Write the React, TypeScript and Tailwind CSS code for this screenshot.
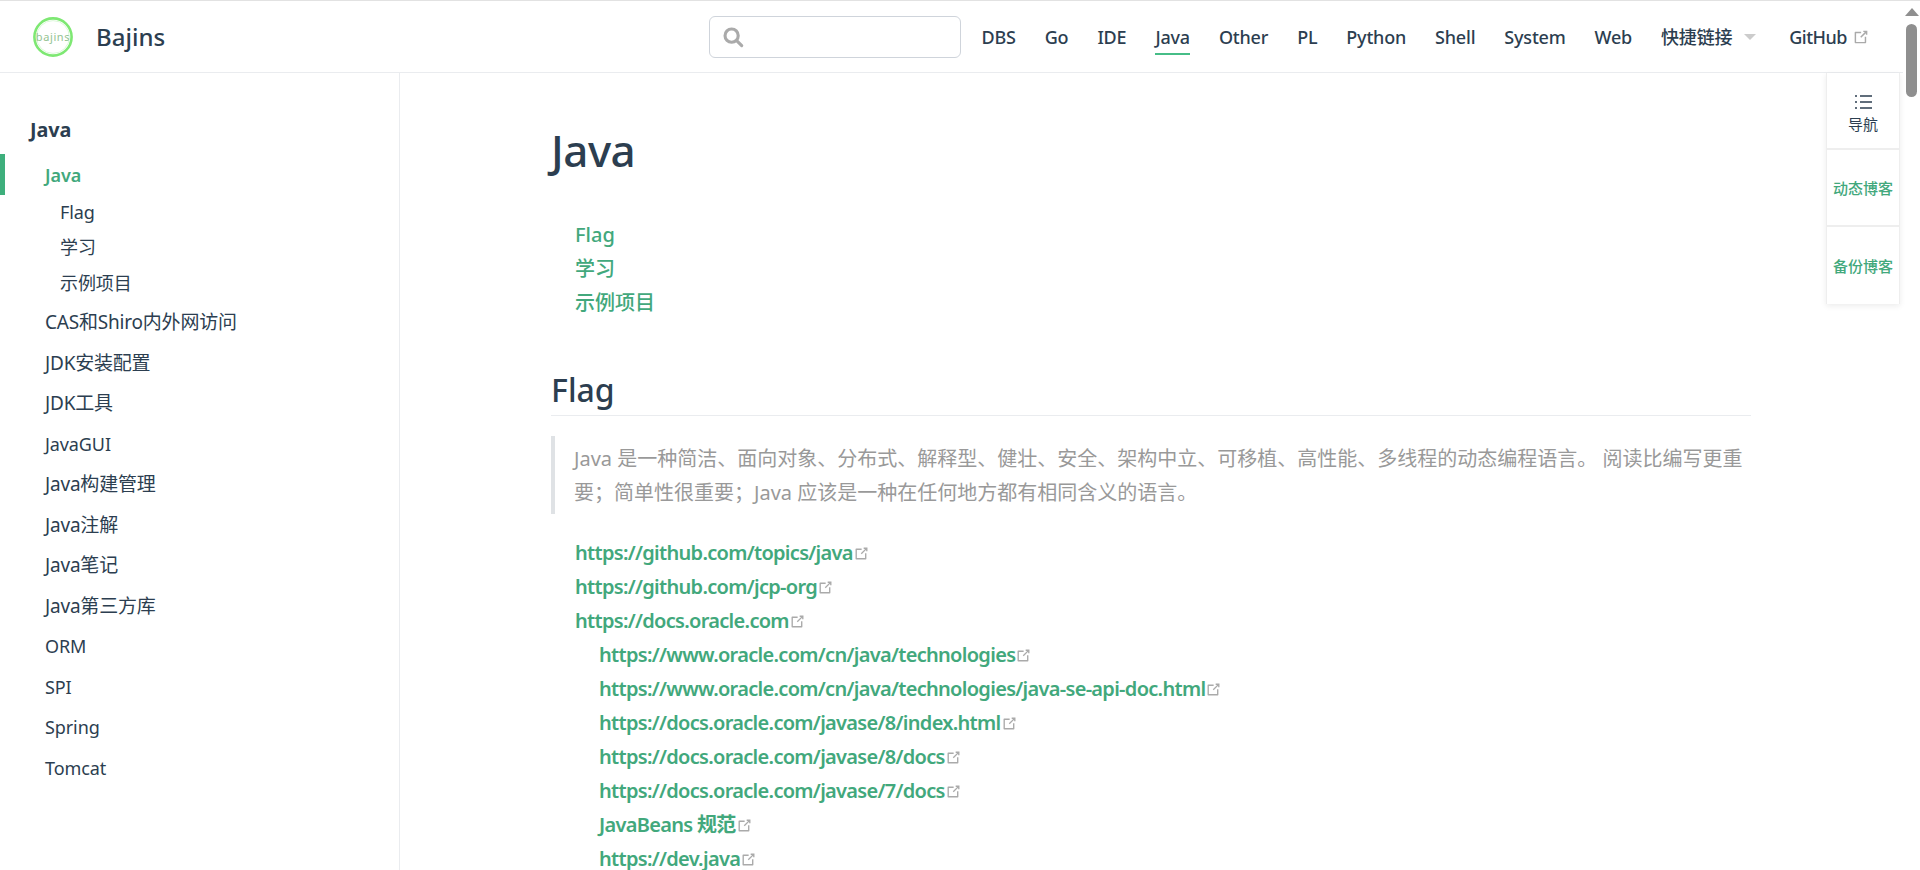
const navItems = ['DBS', 'Go', 'IDE', 'Java', 'Other', 'PL', 'Python', 'Shell', 'System', 'Web'];

const sidebarItems = [
  { label: 'CAS和Shiro内外网访问', cjk: true },
  { label: 'JDK安装配置', cjk: true },
  { label: 'JDK工具', cjk: true },
  { label: 'JavaGUI', cjk: false },
  { label: 'Java构建管理', cjk: true },
  { label: 'Java注解', cjk: true },
  { label: 'Java笔记', cjk: true },
  { label: 'Java第三方库', cjk: true },
  { label: 'ORM', cjk: false },
  { label: 'SPI', cjk: false },
  { label: 'Spring', cjk: false },
  { label: 'Tomcat', cjk: false },
];

const links = [
  { href: 'https://github.com/topics/java', nested: false },
  { href: 'https://github.com/jcp-org', nested: false },
  { href: 'https://docs.oracle.com', nested: false },
  { href: 'https://www.oracle.com/cn/java/technologies', nested: true },
  { href: 'https://www.oracle.com/cn/java/technologies/java-se-api-doc.html', nested: true },
  { href: 'https://docs.oracle.com/javase/8/index.html', nested: true },
  { href: 'https://docs.oracle.com/javase/8/docs', nested: true },
  { href: 'https://docs.oracle.com/javase/7/docs', nested: true },
  { href: 'JavaBeans 规范', nested: true },
  { href: 'https://dev.java', nested: true },
];

const OutboundIcon = ({ className }: { className: string }) => (
  <svg viewBox="0 0 100 100" className={className} fill="currentColor">
    <path d="M18.8,85.1h56l0,0c2.2,0,4-1.8,4-4v-32h-8v28h-48v-48h28v-8h-32l0,0c-2.2,0-4,1.8-4,4v56C14.8,83.3,16.6,85.1,18.8,85.1z" />
    <polygon points="45.7,48.7 51.3,54.3 77.2,28.5 77.2,37.2 85.2,37.2 85.2,14.9 62.8,14.9 62.8,22.9 71.5,22.9" />
  </svg>
);

const Logo = () => (
  <svg viewBox="0 0 40 40" className="w-10 h-10">
    <circle cx="20" cy="20" r="18.6" fill="none" stroke="#7ee873" strokeWidth="2.6" />
    <circle cx="20" cy="20" r="16.4" fill="none" stroke="#d3f6cf" strokeWidth="0.8" />
    <text x="20" y="23.5" textAnchor="middle" fontSize="11" fill="#93c391" letterSpacing="0.6">
      bajins
    </text>
  </svg>
);

const Header = () => (
  <header className="h-[72px] shrink-0 border-b border-[#eaecef] flex items-center pl-[33px] pr-[33px] bg-white">
    <Logo />
    <span className="ml-[23px] pt-[1px] text-[24px] font-medium text-[#2c3e50]">Bajins</span>
    <div className="ml-auto flex items-center text-[18px] font-medium tracking-[-0.2px] text-[#2c3e50]">
      <div className="w-[252px] h-[42px] mr-5 border border-[#cfd4db] rounded-md flex items-center pl-3">
        <svg viewBox="0 0 24 24" className="w-[22px] h-[22px]" fill="none" stroke="#aaaaaa" strokeWidth="3.4" strokeLinecap="round">
          <circle cx="10.5" cy="10.5" r="7.2" />
          <path d="M16 16l5.5 5.5" />
        </svg>
      </div>
      <nav className="flex items-center gap-[29px]">
        {navItems.map((item) => (
          <a
            key={item}
            className={
              item === 'Java'
                ? 'h-[36px] leading-[36px] border-b-2 border-[#46bd87]'
                : 'h-[36px] leading-[36px]'
            }
          >
            {item}
          </a>
        ))}
        <span className="flex items-center pt-[1px]">
          快捷链接
          <span className="ml-3 w-0 h-0 border-x-[6px] border-x-transparent border-t-[6px] border-t-[#cccccc]" />
        </span>
        <span className="flex items-center ml-[4px] pt-[1px] tracking-[-0.5px]">
          GitHub
          <OutboundIcon className="w-[18px] h-[18px] ml-[5px] text-[#aaaaaa]" />
        </span>
      </nav>
    </div>
  </header>
);

const Sidebar = () => (
  <aside className="w-[400px] shrink-0 border-r border-[#eaecef] pt-[42px] text-[18px] tracking-[-0.1px] text-[#2c3e50]">
    <p className="pl-[30px] text-[19.8px] leading-[30px] font-bold">Java</p>
    <a className="block mt-[9px] h-[41px] leading-[43px] pl-[40px] border-l-[5px] border-[#3eaf7c] text-[#42a87c] font-semibold">
      Java
    </a>
    <ul className="pl-[60px]">
      <li className="h-[35px] leading-[35px]">Flag</li>
      <li className="h-[35px] leading-[35px]">学习</li>
      <li className="h-[37px] leading-[37px]">示例项目</li>
    </ul>
    <ul className="pl-[45px]">
      {sidebarItems.map((item) => (
        <li
          key={item.label}
          className={
            item.cjk
              ? 'h-[40.5px] leading-[40.5px] text-[19px] tracking-[-0.2px]'
              : 'h-[40.5px] leading-[40.5px]'
          }
        >
          {item.label}
        </li>
      ))}
    </ul>
  </aside>
);

const Content = () => (
  <main className="flex-1 min-w-0 pl-[151px] pt-[35px] text-[20px] leading-[34px] text-[#2c3e50]">
    <div className="w-[1200px]">
      <h1 className="text-[44px] leading-[84px] font-medium tracking-[-0.5px]">Java</h1>
      <ul className="mt-[26px] pl-[24px] font-medium text-[#42a87c]">
        <li>Flag</li>
        <li>学习</li>
        <li>示例项目</li>
      </ul>
      <h2 className="mt-[44px] text-[32px] leading-[51px] font-medium border-b border-[#eaecef]">Flag</h2>
      <blockquote className="mt-[20px] border-l-4 border-[#dfe2e5] pt-[6px] pb-[4px] pl-[19px] text-[#999999]">
        Java 是一种简洁、面向对象、分布式、解释型、健壮、安全、架构中立、可移植、高性能、多线程的动态编程语言。 阅读比编写更重要；简单性很重要；Java 应该是一种在任何地方都有相同含义的语言。
      </blockquote>
      <ul className="mt-[22px] pl-[24px] font-semibold tracking-[-0.7px] text-[#42a87c]">
        {links.map((link) => (
          <li key={link.href} className={link.nested ? 'pl-[24px] flex items-center' : 'flex items-center'}>
            {link.href}
            <OutboundIcon className="w-[17px] h-[17px] text-[#aaaaaa]" />
          </li>
        ))}
      </ul>
    </div>
  </main>
);

const FloatPanel = () => (
  <div className="absolute top-[72px] right-[3px] w-[74px] bg-white border-x border-[#eeeeee] shadow-[0_2px_6px_rgba(0,0,0,0.08)] text-[15px] text-center">
    <div className="h-[77px] pt-[22px] border-b-2 border-[#eeeeee] flex flex-col items-center text-[#2c3e50]">
      <svg viewBox="0 0 17 14" className="w-[17px] h-[14px]" fill="none" stroke="#2c3e50" strokeWidth="1.7">
        <path d="M5 1h12M5 7h12M5 13h12M0 1h2M0 7h2M0 13h2" />
      </svg>
      <span className="mt-[3px] leading-6">导航</span>
    </div>
    <div className="h-[77px] pt-[2px] border-b-2 border-[#eeeeee] flex items-center justify-center font-medium text-[#42a87c]">动态博客</div>
    <div className="h-[77px] pt-[2px] flex items-center justify-center font-medium text-[#42a87c]">备份博客</div>
  </div>
);

const Scrollbar = () => (
  <div className="w-[17px] shrink-0 bg-white flex flex-col items-center">
    <div className="mt-[7px] w-0 h-0 border-x-[7px] border-x-transparent border-b-[8px] border-b-[#8f8f8f]" />
    <div className="mt-[8px] w-[11px] h-[73px] rounded-full bg-[#8f8f8f]" />
  </div>
);

export default function App() {
  return (
    <div className="h-screen overflow-hidden flex border-t border-[#e2e2e2] bg-white font-['Noto_Sans','Noto_Sans_CJK_SC',sans-serif]">
      <div className="flex-1 min-w-0 flex flex-col relative">
        <Header />
        <div className="flex-1 min-h-0 flex">
          <Sidebar />
          <Content />
        </div>
        <FloatPanel />
      </div>
      <Scrollbar />
    </div>
  );
}
